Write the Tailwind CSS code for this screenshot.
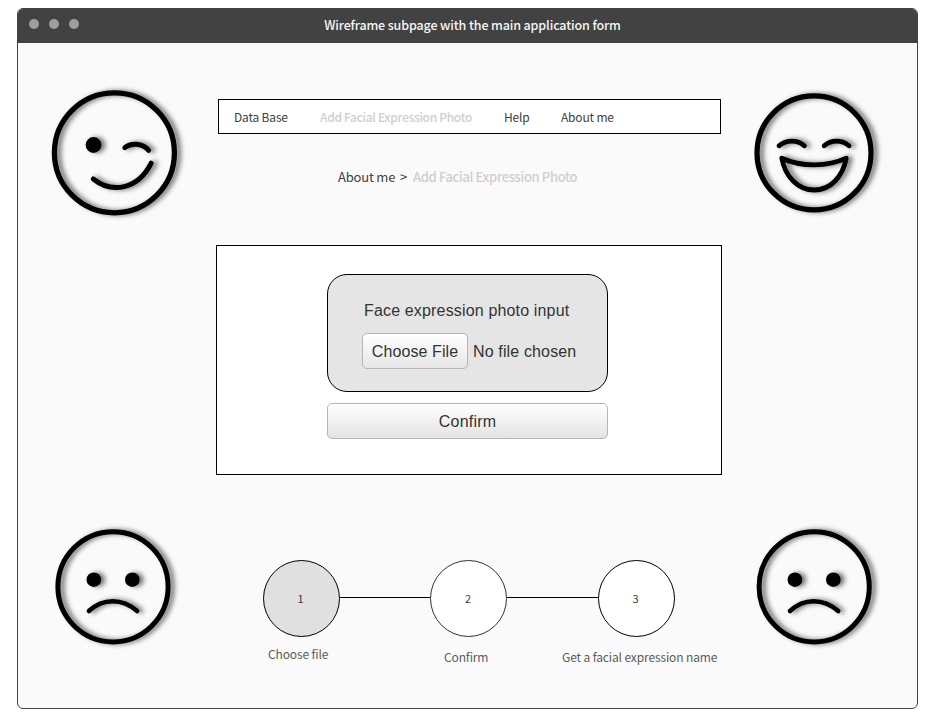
<!DOCTYPE html>
<html lang="en">
<head>
<meta charset="utf-8">
<title>Wireframe subpage with the main application form</title>
<script src="https://cdn.jsdelivr.net/npm/@tailwindcss/browser@4"></script>
</head>
<body class="bg-white pt-2 pl-[17px] h-[726px] overflow-hidden font-['Noto_Sans_CJK_SC','Open_Sans',sans-serif] text-[#404040]">
<div class="w-[901px] h-[701px] rounded-[6px] border border-[#424242] bg-[#fafafa] overflow-hidden">
  <header class="h-[34px] bg-[#424242] grid grid-cols-[1fr_auto_1fr] items-center">
    <div class="flex gap-[10px] pl-[10.5px] pb-[4px]">
      <span class="size-[10px] rounded-full bg-[#9e9e9e]"></span>
      <span class="size-[10px] rounded-full bg-[#9e9e9e]"></span>
      <span class="size-[10px] rounded-full bg-[#9e9e9e]"></span>
    </div>
    <h1 class="text-[12.5px] leading-[18px] -mt-[2px] font-medium tracking-[-0.13px] text-[#f5f5f5] whitespace-nowrap pl-[10px]">Wireframe subpage with the main application form</h1>
    <div></div>
  </header>
  <div class="flex pl-[22px] h-[665px]">
    <aside class="w-[150px] pt-[37px] flex flex-col gap-[290px]">
      <svg class="w-[150px] h-[145px] shrink-0 drop-shadow-[4px_0px_2.5px_rgba(0,0,0,0.55)]" viewBox="0 0 150 145" fill="none" stroke="#000" stroke-width="5.3" stroke-linecap="round" stroke-linejoin="round">
        <circle cx="74.4" cy="72.8" r="60"/>
        <circle cx="53.5" cy="65" r="7.9" fill="#000" stroke="none"/>
        <path stroke-width="5" d="M84.800 67.700C91 62.500 102 63 108.600 70.300M53.300 99C72 114 98 109.500 111.200 83.200"/>
      </svg>
      <svg class="w-[150px] h-[145px] shrink-0 drop-shadow-[4px_0px_2.5px_rgba(0,0,0,0.55)]" viewBox="0 0 150 145" fill="none" stroke="#000" stroke-width="5" stroke-linecap="round">
        <circle cx="73" cy="71.800" r="55.100"/>
        <circle cx="53.800" cy="64.700" r="7.300" fill="#000" stroke="none"/>
        <circle cx="92.300" cy="64.700" r="7.300" fill="#000" stroke="none"/>
        <path stroke-width="4.600" d="M48.900 96C63 83 82 83 97.100 96"/>
      </svg>
    </aside>
    <main class="w-[550px] flex flex-col">
      <nav class="mt-[56px] ml-[28px] w-[503px] h-[35px] border border-black bg-white flex items-center text-[12px] leading-[18px] tracking-[-0.18px] whitespace-nowrap">
        <a class="ml-[15px] w-[86px]">Data Base</a>
        <a class="w-[184px] font-medium tracking-[-0.31px] text-[#d0cece]">Add Facial Expression Photo</a>
        <a class="w-[57px]">Help</a>
        <a>About me</a>
      </nav>
      <div class="mt-[33px] ml-[148px] h-5 flex items-center text-[13px] leading-5 tracking-[-0.2px] whitespace-nowrap">
        <span class="w-[62px]">About me</span>
        <span class="w-[13px]">&gt;</span>
        <span class="font-medium tracking-[-0.35px] text-[#d3cdd1]">Add Facial Expression Photo</span>
      </div>
      <form class="mt-[58px] ml-[26px] w-[506px] h-[230px] border border-black bg-white pt-[28px] pl-[110px] font-['Liberation_Sans',Arial,sans-serif] text-[16px] text-[#333]">
        <div class="w-[281px] h-[118px] rounded-[20px] border-[1.500px] border-black bg-[#e5e5e5] pt-[26px] pl-[34px]">
          <div class="leading-5 pl-[2px] tracking-[0.16px] whitespace-nowrap">Face expression photo input</div>
          <div class="mt-[12px] flex items-center whitespace-nowrap">
            <button type="button" class="w-[106px] h-[36px] pt-[2px] tracking-[0.09px] rounded-[5px] border border-[#b5b5b5] bg-linear-to-b from-white to-[#e6e6e6]">Choose File</button>
            <span class="ml-[5px] pt-[2px] tracking-[0.14px]">No file chosen</span>
          </div>
        </div>
        <button type="button" class="block mt-[11px] w-[281px] h-[36px] pt-[2px] tracking-[0.2px] rounded-[5px] border border-[#b5b5b5] bg-linear-to-b from-white to-[#e3e3e3]">Confirm</button>
      </form>
      <div class="mt-[85px] ml-[72.5px] flex items-center text-[11px]">
        <div class="size-[77px] rounded-full border border-black bg-[#e0e0e0] flex items-center justify-center pr-px">1</div>
        <div class="w-[90.5px] h-px bg-black -mt-[2px]"></div>
        <div class="size-[77px] rounded-full border border-[#333] bg-white flex items-center justify-center pr-px">2</div>
        <div class="w-[90.5px] h-px bg-black -mt-[2px]"></div>
        <div class="size-[77px] rounded-full border border-black bg-white flex items-center justify-center pr-px">3</div>
      </div>
      <div class="mt-[8px] ml-[78px] flex text-[12px] leading-[18px] tracking-[-0.13px] text-[#5c5c5c] whitespace-nowrap">
        <span class="w-[176px]">Choose file</span>
        <span class="w-[118px] pt-[3px]">Confirm</span>
        <span class="pt-[3px]">Get a facial expression name</span>
      </div>
    </main>
    <aside class="w-[150px] pt-[37px] flex flex-col gap-[290px]">
      <svg class="w-[150px] h-[145px] shrink-0 drop-shadow-[4px_0px_2.5px_rgba(0,0,0,0.55)]" viewBox="0 0 150 145" fill="none" stroke="#000" stroke-width="5.200" stroke-linecap="round" stroke-linejoin="round">
        <circle cx="74" cy="72.900" r="57"/>
        <path stroke-width="4.800" d="M39 65.800C46.500 59.500 57.500 59.500 64.300 65.800M84.200 65.800C91 59.500 102 59.500 109 65.800M41.800 78.200C61 87 88 87 106.200 78.200C103 96.500 90.500 110 74.200 110C58 110 45 96.500 41.800 78.200Z"/>
      </svg>
      <svg class="w-[150px] h-[145px] shrink-0 drop-shadow-[4px_0px_2.5px_rgba(0,0,0,0.55)]" viewBox="0 0 150 145" fill="none" stroke="#000" stroke-width="5" stroke-linecap="round">
        <circle cx="74.200" cy="71.800" r="55.100"/>
        <circle cx="54.900" cy="64.700" r="7.300" fill="#000" stroke="none"/>
        <circle cx="93.300" cy="64.700" r="7.300" fill="#000" stroke="none"/>
        <path stroke-width="4.600" d="M50 96C64 83 83 83 98.200 96"/>
      </svg>
    </aside>
  </div>
</div>
</body>
</html>
